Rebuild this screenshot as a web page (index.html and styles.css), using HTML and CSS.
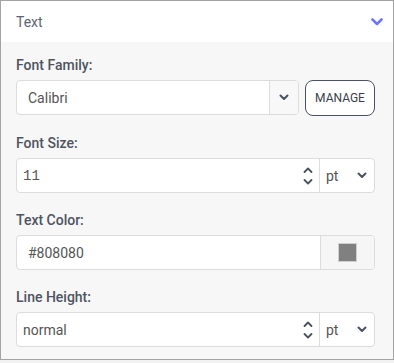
FILE: index.html
```html
<!DOCTYPE html>
<html lang="en">
<head>
  <meta charset="UTF-8" />
  <meta name="viewport" content="width=device-width, initial-scale=1.0"/>
  <title>Text Settings</title>
  <link rel="stylesheet" href="styles.css">
</head>
<body>
  <div class="panel">
    <div class="panel-header">
      <span class="panel-title">Text</span>
      <svg class="collapse-icon" width="12" height="8" viewBox="0 0 12 8">
        <polyline points="1.5,1.5 6,6 10.5,1.5" fill="none" stroke="#6b78f7" stroke-width="2.6" stroke-linecap="round" stroke-linejoin="round"/>
      </svg>
    </div>

    <div class="panel-body">
      <div class="field">
        <label class="field-label">Font Family:</label>
        <div class="field-row">
          <div class="control control-select">
            <span class="control-value">Calibri</span>
            <span class="control-addon">
              <svg width="10" height="7" viewBox="0 0 10 7">
                <polyline points="1.5,1.5 5,5 8.5,1.5" fill="none" stroke="#4b5160" stroke-width="2" stroke-linecap="round" stroke-linejoin="round"/>
              </svg>
            </span>
          </div>
          <button type="button" class="manage-btn">MANAGE</button>
        </div>
      </div>

      <div class="field">
        <label class="field-label">Font Size:</label>
        <div class="control">
          <span class="control-value mono">11</span>
          <span class="spinner">
            <svg width="10" height="20" viewBox="0 0 10 20">
              <polyline points="1.5,6 5,2.5 8.5,6" fill="none" stroke="#4b5160" stroke-width="1.8" stroke-linecap="round" stroke-linejoin="round"/>
              <polyline points="1.5,14 5,17.5 8.5,14" fill="none" stroke="#4b5160" stroke-width="1.8" stroke-linecap="round" stroke-linejoin="round"/>
            </svg>
          </span>
          <span class="unit">
            <span>pt</span>
            <svg width="10" height="7" viewBox="0 0 10 7">
              <polyline points="1.5,1.5 5,5 8.5,1.5" fill="none" stroke="#4b5160" stroke-width="2" stroke-linecap="round" stroke-linejoin="round"/>
            </svg>
          </span>
        </div>
      </div>

      <div class="field">
        <label class="field-label">Text Color:</label>
        <div class="control">
          <span class="control-value color-value">#808080</span>
          <span class="swatch-box"><span class="swatch"></span></span>
        </div>
      </div>

      <div class="field">
        <label class="field-label">Line Height:</label>
        <div class="control">
          <span class="control-value">normal</span>
          <span class="spinner">
            <svg width="10" height="20" viewBox="0 0 10 20">
              <polyline points="1.5,6 5,2.5 8.5,6" fill="none" stroke="#4b5160" stroke-width="1.8" stroke-linecap="round" stroke-linejoin="round"/>
              <polyline points="1.5,14 5,17.5 8.5,14" fill="none" stroke="#4b5160" stroke-width="1.8" stroke-linecap="round" stroke-linejoin="round"/>
            </svg>
          </span>
          <span class="unit">
            <span>pt</span>
            <svg width="10" height="7" viewBox="0 0 10 7">
              <polyline points="1.5,1.5 5,5 8.5,1.5" fill="none" stroke="#4b5160" stroke-width="2" stroke-linecap="round" stroke-linejoin="round"/>
            </svg>
          </span>
        </div>
      </div>
    </div>
  </div>
</body>
</html>
```

FILE: styles.css
```css
*, *::before, *::after {
  box-sizing: border-box;
}

html, body {
  margin: 0;
  padding: 0;
}

body {
  font-family: Roboto, "Liberation Sans", sans-serif;
  background: #f2f2f2;
  width: 394px;
  height: 363px;
}

.panel {
  width: 394px;
  height: 360px;
  border: 1px solid #a3a3a3;
  background-color: #f7f7f7;
}

.panel-header {
  height: 41px;
  background-color: #ffffff;
  display: flex;
  align-items: center;
  justify-content: space-between;
  padding: 0 10px 0 15px;
}

.panel-title {
  font-size: 14px;
  color: #5d6573;
}

.collapse-icon {
  display: block;
}

.panel-body {
  padding: 13px 18px 0 15px;
}

.field {
  margin-bottom: 17px;
}

.field-label {
  display: block;
  font-size: 14px;
  font-weight: 500;
  line-height: 20px;
  color: #4e5462;
  margin-bottom: 5px;
}

.field-row {
  display: flex;
  gap: 6px;
}

.control {
  flex: 1;
  display: flex;
  align-items: stretch;
  height: 35px;
  background-color: #ffffff;
  border: 1px solid #dcdcdc;
  border-radius: 4px;
  overflow: hidden;
}

.control-value {
  flex: 1;
  display: flex;
  align-items: center;
  padding-left: 6px;
  font-size: 14px;
  color: #555;
}

.control-select .control-value,
.color-value {
  padding-left: 11px;
}

.mono {
  font-family: "Liberation Mono", monospace;
  font-size: 14px;
}

.control-addon {
  width: 29px;
  display: flex;
  align-items: center;
  justify-content: center;
  border-left: 1px solid #dcdcdc;
  background-color: #f8f8f8;
}

.control-addon svg,
.spinner svg,
.unit svg {
  display: block;
}

.spinner {
  display: flex;
  align-items: center;
  padding-right: 6px;
}

.unit {
  width: 55px;
  display: flex;
  align-items: center;
  justify-content: space-between;
  padding: 0 7px 0 6px;
  border-left: 1px solid #dcdcdc;
  font-size: 14px;
  color: #555;
}

.swatch-box {
  width: 54px;
  display: flex;
  align-items: center;
  justify-content: center;
  border-left: 1px solid #dcdcdc;
  background-color: #f6f6f6;
}

.swatch {
  width: 19px;
  height: 19px;
  background-color: #808080;
  border: 1px solid #cfcfcf;
}

.manage-btn {
  width: 70px;
  height: 36px;
  background-color: #ffffff;
  border: 1px solid #4b5160;
  border-radius: 8px;
  font-family: Roboto, "Liberation Sans", sans-serif;
  font-size: 12px;
  font-weight: 400;
  color: #3a3f4a;
  padding: 0;
  cursor: pointer;
}
```
